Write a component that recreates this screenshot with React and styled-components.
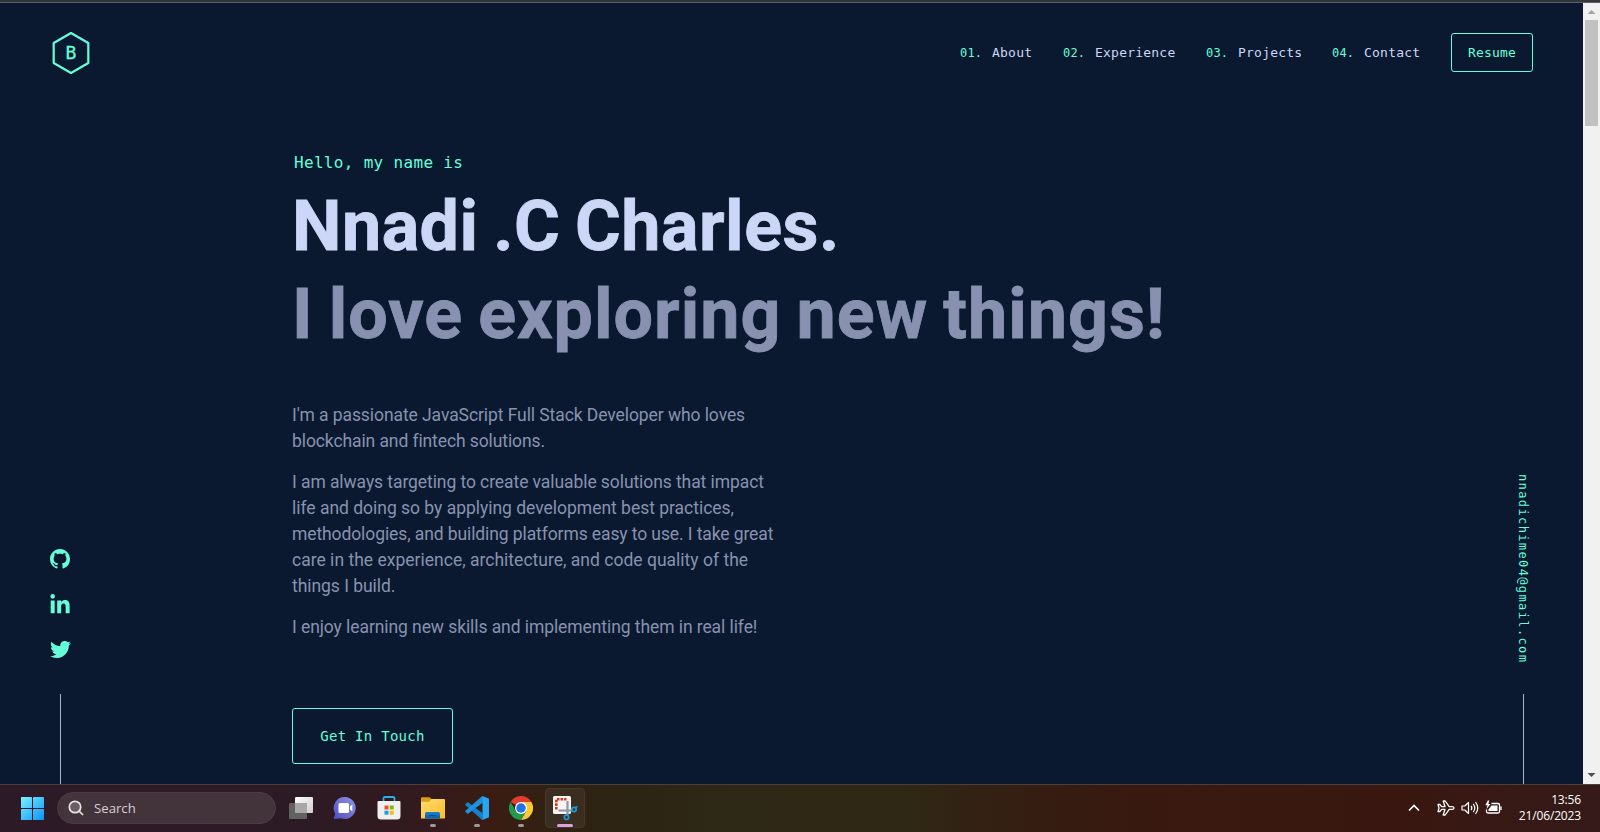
import React from "react";
import styled, { createGlobalStyle } from "styled-components";
import { FaLinkedinIn, FaTwitter } from "react-icons/fa";

const navy = "#0a192f";
const green = "#64ffda";
const slate = "#8892b0";
const mono = `"DejaVu Sans Mono", "Liberation Mono", monospace`;
const sans = `Roboto, "Liberation Sans", sans-serif`;

const GlobalStyle = createGlobalStyle`
  * { box-sizing: border-box; }
  body { margin: 0; background: ${navy}; overflow: hidden; }
  h1, h2, p, ul { margin: 0; padding: 0; }
  a { color: inherit; text-decoration: none; }
`;

const Desktop = styled.div`
  width: 1600px;
  height: 832px;
  display: flex;
  flex-direction: column;
  overflow: hidden;
  font-family: ${sans};
`;

const BrowserEdge = styled.div`
  height: 3px;
  flex: none;
  background: #35363a;
  border-bottom: 1px solid #5f6064;
`;

const Viewport = styled.div`
  height: 781px;
  flex: none;
  display: flex;
`;

const Page = styled.div`
  flex: 1;
  display: flex;
  flex-direction: column;
  background: ${navy};
`;

const Header = styled.header`
  height: 100px;
  flex: none;
  display: flex;
  align-items: center;
  justify-content: space-between;
  padding: 0 50px;
`;

const Logo = styled.svg`
  display: block;
  width: 42px;
  height: 44px;
  text {
    font: 18px ${mono};
    fill: ${green};
    stroke: ${green};
    stroke-width: 0.3;
  }
`;

const Nav = styled.nav`
  display: flex;
  align-items: center;
`;

const NavLink = styled.a`
  display: flex;
  align-items: baseline;
  width: ${(p) => p.$width}px;
  font: 13px/20px ${mono};
  letter-spacing: 0.22px;
  color: #ccd6f6;
  white-space: pre;
`;

const NavNumber = styled.span`
  width: 32px;
  font-size: 12px;
  letter-spacing: 0.2px;
  color: ${green};
`;

const OutlineButton = styled.a`
  display: flex;
  align-items: center;
  justify-content: center;
  width: ${(p) => (p.$large ? 161 : 82)}px;
  height: ${(p) => (p.$large ? 56 : 39)}px;
  margin-top: ${(p) => (p.$large ? 68 : 0)}px;
  margin-bottom: ${(p) => (p.$large ? 0 : 2)}px;
  border: 1px solid ${green};
  border-radius: 3px;
  color: ${green};
  font: ${(p) => (p.$large ? 14 : 13)}px/1 ${mono};
  letter-spacing: ${(p) => (p.$large ? 0.28 : 0.2)}px;
  white-space: pre;
`;

const Body = styled.div`
  flex: 1;
  display: flex;
  justify-content: space-between;
`;

const SideRail = styled.aside`
  width: ${(p) => p.$width}px;
  display: flex;
  flex-direction: column;
  justify-content: flex-end;
  align-items: center;
  color: ${green};
  &::after {
    content: "";
    width: 1px;
    height: 90px;
    background: #a8b2d1;
  }
`;

const SocialList = styled.div`
  display: flex;
  flex-direction: column;
  align-items: center;
  gap: 24px;
  margin-bottom: 34px;
  svg { display: block; }
  svg:first-child { margin-bottom: 1px; }
  svg:last-child { margin-top: -1px; }
`;

const Email = styled.a`
  writing-mode: vertical-rl;
  font: 12px/20px ${mono};
  letter-spacing: 1.38px;
  margin: 0 1px 31px 0;
`;

const Hero = styled.main`
  flex: 1;
  display: flex;
  flex-direction: column;
  align-items: flex-start;
  padding: 50px 0 0 172px;
`;

const Greeting = styled.h1`
  padding-left: 2px;
  font: 400 16px/20px ${mono};
  letter-spacing: 0.32px;
  color: ${green};
`;

const Title = styled.h2`
  margin-top: ${(p) => p.$top}px;
  font: 700 70px/77px ${sans};
  letter-spacing: ${(p) => p.$spacing}px;
  word-spacing: ${(p) => p.$wordSpacing}px;
  color: ${(p) => p.$color};
  -webkit-text-stroke: 0.8px ${(p) => p.$color};
  white-space: nowrap;
`;

const Paragraph = styled.p`
  margin-top: ${(p) => p.$top}px;
  font: 400 17.5px/26px ${sans};
  color: ${slate};
`;

const Line = styled.span`
  display: block;
  white-space: nowrap;
  letter-spacing: ${(p) => p.$spacing || 0}px;
`;

const Scrollbar = styled.div`
  width: 17px;
  display: flex;
  flex-direction: column;
  align-items: center;
  background: #f1f1f1;
  svg { display: block; flex: none; }
`;

const Thumb = styled.div`
  width: 13px;
  height: 106px;
  margin-bottom: auto;
  background: #c1c1c1;
`;

const Taskbar = styled.footer`
  height: 48px;
  flex: none;
  display: flex;
  align-items: center;
  padding: 0 19px 1px 21px;
  border-top: 1px solid #4a3f3c;
  background: linear-gradient(90deg, #2c1a27 0, #2c1a25 300px, #321a1d 420px, #3a1c13 495px, #2f2212 560px, #2c2514 650px, #2e2916 750px, #2f2815 900px, #332012 990px, #38190f 1130px, #391710 1400px, #351a19 1600px);
  font-family: "Open Sans", "Noto Sans", sans-serif;
`;

const StartButton = styled.div`
  padding-top: 1px;
  svg { display: block; }
`;

const SearchBox = styled.div`
  width: 219px;
  height: 32px;
  margin: 0 13px 0 13px;
  display: flex;
  align-items: center;
  gap: 10px;
  padding-left: 10px;
  border: 1px solid #4b3b43;
  border-radius: 16px;
  background: #43343c;
  color: #d5cfd2;
  font-size: 13.2px;
`;

const Apps = styled.div`
  display: flex;
  gap: 4px;
  margin-left: -8px;
`;

const AppButton = styled.div`
  position: relative;
  width: 40px;
  height: 40px;
  display: flex;
  align-items: center;
  justify-content: center;
  border-radius: 4px;
  border: 1px solid ${(p) => (p.$state === "active" ? "#43382b" : "transparent")};
  background: ${(p) => (p.$state === "active" ? "#3b2e21" : "transparent")};
  svg { display: block; }
  &::after {
    content: "";
    display: ${(p) => (p.$state ? "block" : "none")};
    position: absolute;
    bottom: 0;
    width: ${(p) => (p.$state === "active" ? 16 : 6)}px;
    height: 3px;
    border-radius: 2px;
    background: ${(p) => (p.$state === "active" ? "#dda0e0" : "#a09896")};
  }
`;

const Tray = styled.div`
  margin-left: auto;
  display: flex;
  align-items: center;
  color: #fff;
`;

const Clock = styled.div`
  width: 79px;
  text-align: right;
  font-size: 12px;
  line-height: 16px;
  letter-spacing: -0.15px;
  padding-bottom: 1px;
`;

const links = [
  ["01.", "About", 103],
  ["02.", "Experience", 143],
  ["03.", "Projects", 126],
  ["04.", "Contact", 119],
];

const GithubIcon = () => (
  <svg width="20" height="20" viewBox="0 0 16 16" fill="currentColor">
    <path d="M8 0C3.58 0 0 3.58 0 8c0 3.54 2.29 6.53 5.47 7.59.4.07.55-.17.55-.38 0-.19-.01-.82-.01-1.49-2.01.37-2.53-.49-2.69-.94-.09-.23-.48-.94-.82-1.13-.28-.15-.68-.52-.01-.53.63-.01 1.08.58 1.23.82.72 1.21 1.87.87 2.33.66.07-.52.28-.87.51-1.07-1.78-.2-3.64-.89-3.64-3.95 0-.87.31-1.59.82-2.15-.08-.2-.36-1.02.08-2.12 0 0 .67-.21 2.2.82.64-.18 1.32-.27 2-.27s1.36.09 2 .27c1.53-1.04 2.2-.82 2.2-.82.44 1.1.16 1.92.08 2.12.51.56.82 1.27.82 2.15 0 3.07-1.87 3.75-3.65 3.95.29.25.54.73.54 1.48 0 1.07-.01 1.93-.01 2.2 0 .21.15.46.55.38A8.01 8.01 0 0 0 16 8c0-4.42-3.58-8-8-8z" />
  </svg>
);

const WindowsIcon = () => (
  <svg width="23" height="23" viewBox="0 0 23 23">
    <defs>
      <linearGradient id="win" gradientUnits="userSpaceOnUse" x1="0" y1="0" x2="23" y2="23">
        <stop stopColor="#7df0ff" />
        <stop offset="1" stopColor="#0a93f5" />
      </linearGradient>
    </defs>
    <g fill="url(#win)">
      <rect width="11" height="11" rx=".6" />
      <rect x="12" width="11" height="11" rx=".6" />
      <rect y="12" width="11" height="11" rx=".6" />
      <rect x="12" y="12" width="11" height="11" rx=".6" />
    </g>
  </svg>
);

const TaskViewIcon = () => (
  <svg width="24" height="22" viewBox="0 0 24 22">
    <defs>
      <linearGradient id="tv" x1="0" y1="0" x2="1" y2="1">
        <stop stopColor="#fff" />
        <stop offset="1" stopColor="#cfcdcd" />
      </linearGradient>
    </defs>
    <rect x="6" width="18" height="16" rx="1" fill="url(#tv)" />
    <rect y="6" width="18" height="16" rx="1" fill="#626060" />
    <path d="M6 6h12v10H6z" fill="#a8a6a6" />
  </svg>
);

const ChatIcon = () => (
  <svg width="24" height="24" viewBox="0 0 24 24">
    <defs>
      <linearGradient id="chat" x1="0" y1="1" x2="1" y2="0">
        <stop stopColor="#4a4fc4" />
        <stop offset=".5" stopColor="#7470d0" />
        <stop offset="1" stopColor="#8b96e8" />
      </linearGradient>
    </defs>
    <path d="M12 1a11 11 0 1 1-4.4 21.2L1.7 23c-.7.1-1-.4-.8-1l1.3-4.4A11 11 0 0 1 12 1z" fill="url(#chat)" />
    <rect x="5.500" y="7" width="10.500" height="10" rx="1.500" fill="#fff" />
    <path d="M17 10.500 19.300 8.500v7L17 13.500z" fill="#fff" />
  </svg>
);

const StoreIcon = () => (
  <svg width="24" height="24" viewBox="0 0 24 24">
    <path d="M6.500 6V2.500Q6.500 1 8 1h8q1.500 0 1.500 1.500V6" fill="none" stroke="#29aee6" strokeWidth="1.800" />
    <path d="M.5 6q0-1 1-1h21q1 0 1 1v14q0 3.500-3.500 3.500H4Q.5 23.500.5 20z" fill="#efefef" />
    <path d="M7.500 9.500h4v4h-4z" fill="#f0502a" />
    <path d="M12.700 9.500h4v4h-4z" fill="#7cb912" />
    <path d="M7.500 14.700h4v4h-4z" fill="#10a3ea" />
    <path d="M12.700 14.700h4v4h-4z" fill="#fdb90c" />
  </svg>
);

const FolderIcon = () => (
  <svg width="24" height="22" viewBox="0 0 24 22">
    <defs>
      <linearGradient id="folder" x1="0" y1="0" x2="1" y2="1">
        <stop stopColor="#ffdc70" />
        <stop offset="1" stopColor="#fbbd2b" />
      </linearGradient>
      <linearGradient id="dock" x1="0" y1="0" x2="0" y2="1">
        <stop stopColor="#1684d8" />
        <stop offset="1" stopColor="#0b5ca9" />
      </linearGradient>
    </defs>
    <path d="M0 1.200Q0 .2 1 .2h7.500L10.500 2H20v6H0z" fill="#df9c12" />
    <path d="M0 4.800h8L10.500 2H23q1 0 1 1v18.500H0z" fill="url(#folder)" />
    <path d="M4 21.500v-5Q4 15 5.500 15h12q1.500 0 1.500 1.500v5z" fill="url(#dock)" />
    <path d="M8 18.500h7" stroke="#084e91" />
  </svg>
);

const CodeIcon = () => (
  <svg width="24" height="24" viewBox="0 0 24 24">
    <path d="M17.500 0 24 2.800v18.400L17.500 24z" fill="#27a7f2" />
    <path d="M.5 8 2.300 6.400q.5-.4 1 0L18 17.500V24q-.8-.1-1.300-.6L.5 9.200q-.6-.6 0-1.200z" fill="#1680c8" />
    <path d="M.5 16 2.300 17.600q.5.4 1 0L18 6.500V0q-.8.1-1.300.6L.5 14.800q-.6.6 0 1.200z" fill="#1c93dd" />
  </svg>
);

const ChromeIcon = () => (
  <svg width="24" height="24" viewBox="0 0 48 48">
    <path d="M24 24 3.200 12A24 24 0 0 1 44.800 12z" fill="#e33b2e" />
    <path d="M24 12h20.800A24 24 0 0 1 24 48l10.400-18z" fill="#fcc934" />
    <path d="M3.200 12 13.600 30 24 36h5L24 48A24 24 0 0 1 3.200 12z" fill="#219a4c" />
    <path d="M24 48 34.400 30 24 34l-3 2 3.500-.2z" fill="#219a4c" />
    <circle cx="24" cy="24" r="12" fill="#fff" />
    <circle cx="24" cy="24" r="9.500" fill="#1f73e8" />
  </svg>
);

const SnipIcon = () => (
  <svg width="26" height="26" viewBox="0 0 26 26">
    <rect x="1" y="1" width="18" height="18" rx="1.500" fill="#f5f3f3" />
    <path d="M4.300 14.500V4.300H14.500" fill="none" stroke="#d2381f" strokeWidth="2.600" strokeDasharray="2.600 1" />
    <path d="M15.500 6v9.500H21M6.500 15.500h9v5" fill="none" stroke="#8f979e" strokeWidth="2.200" />
    <circle cx="14.500" cy="22.300" r="2.200" fill="none" stroke="#1c9ad8" strokeWidth="1.700" />
    <circle cx="22" cy="14.500" r="2.200" fill="none" stroke="#1c9ad8" strokeWidth="1.700" />
    <path d="m23.500 12.500 2-1" fill="none" stroke="#1c9ad8" strokeWidth="1.500" />
  </svg>
);

const TrayIcons = () => (
  <svg width="96" height="20" viewBox="0 0 96 20" fill="none" stroke="#fff" strokeWidth="1.300">
    <path d="m3 12.500 5-5 5 5" strokeWidth="1.600" />
    <path transform="translate(31 2)" d="M1 4.500h1.800l2 2.200H8L6.200 1h2l4 5.700h3.300q1.500.3 1.500 1.300t-1.500 1.300h-3.300l-4 5.700h-2L8 9.300H4.800l-2 2.200H1L2 8z" strokeLinejoin="round" />
    <path transform="translate(.5 0)" d="M55.500 8h2.800L62 4.500v11L58.300 12h-2.800zM64.500 7.800q1.800 2.200 0 4.400M66.700 5.800q3.300 4.200 0 8.400M69 4q4.600 6 0 12" strokeWidth="1.200" strokeLinejoin="round" />
    <path d="M85.500 5.500H92q1.500 0 1.500 1.500v6.500q0 1.500-1.500 1.500H82q-1.500 0-1.500-1.500V11.500M95 8.500v3.500" />
    <path d="M85.500 7.500h6V13h-9v-1.500z" fill="#fff" stroke="none" />
    <path d="M81.800 2.500 79.300 7.200h2.200l-1 3.800L84.500 6h-2.200l1-3.500z" fill="#fff" stroke="none" />
  </svg>
);

export default function App() {
  return (
    <Desktop>
      <GlobalStyle />
      <BrowserEdge />
      <Viewport>
        <Page>
          <Header>
            <Logo viewBox="0 0 42 44">
              <path d="M21 2 38.300 12v20L21 42 3.700 32V12z" fill="none" stroke={green} strokeWidth="2.200" strokeLinejoin="round" />
              <text x="21" y="28" textAnchor="middle">B</text>
            </Logo>
            <Nav>
              {links.map(([number, label, width]) => (
                <NavLink key={number} $width={width}>
                  <NavNumber>{number}</NavNumber>
                  {label}
                </NavLink>
              ))}
              <OutlineButton>Resume</OutlineButton>
            </Nav>
          </Header>
          <Body>
            <SideRail $width={120}>
              <SocialList>
                <GithubIcon />
                <FaLinkedinIn size={22} />
                <FaTwitter size={21} />
              </SocialList>
            </SideRail>
            <Hero>
              <Greeting>Hello, my name is</Greeting>
              <Title $top={15} $spacing={0.5} $wordSpacing={-3.2} $color="#ccd6f6">Nnadi .C Charles.</Title>
              <Title $top={11} $spacing={1} $wordSpacing={-3.2} $color={slate}>I love exploring new things!</Title>
              <Paragraph $top={49}>
                <Line $spacing={-0.08}>I'm a passionate JavaScript Full Stack Developer who loves</Line>
                <Line $spacing={-0.1}>blockchain and fintech solutions.</Line>
              </Paragraph>
              <Paragraph $top={15}>
                <Line $spacing={-0.08}>I am always targeting to create valuable solutions that impact</Line>
                <Line $spacing={-0.02}>life and doing so by applying development best practices,</Line>
                <Line $spacing={-0.1}>methodologies, and building platforms easy to use. I take great</Line>
                <Line $spacing={0.01}>care in the experience, architecture, and code quality of the</Line>
                <Line $spacing={-0.05}>things I build.</Line>
              </Paragraph>
              <Paragraph $top={15}>
                <Line $spacing={-0.08}>I enjoy learning new skills and implementing them in real life!</Line>
              </Paragraph>
              <OutlineButton $large>Get In Touch</OutlineButton>
            </Hero>
            <SideRail $width={119}>
              <Email>nnadichime04@gmail.com</Email>
            </SideRail>
          </Body>
        </Page>
        <Scrollbar>
          <svg width="17" height="17"><path d="m4.500 11 4-4 4 4z" fill="#a3a3a3" /></svg>
          <Thumb />
          <svg width="17" height="17"><path d="m4.500 6 4 4 4-4z" fill="#505050" /></svg>
        </Scrollbar>
      </Viewport>
      <Taskbar>
        <StartButton><WindowsIcon /></StartButton>
        <SearchBox>
          <svg width="16" height="16" viewBox="0 0 16 16" fill="#6a5d64" stroke="#e8e4e6" strokeWidth="1.700">
            <circle cx="7" cy="7" r="5.700" />
            <path d="m11 11 4 4" />
          </svg>
          Search
        </SearchBox>
        <Apps>
          <AppButton><TaskViewIcon /></AppButton>
          <AppButton><ChatIcon /></AppButton>
          <AppButton><StoreIcon /></AppButton>
          <AppButton $state="open"><FolderIcon /></AppButton>
          <AppButton $state="open"><CodeIcon /></AppButton>
          <AppButton $state="open"><ChromeIcon /></AppButton>
          <AppButton $state="active"><SnipIcon /></AppButton>
        </Apps>
        <Tray>
          <TrayIcons />
          <Clock>
            <div>13:56</div>
            <div>21/06/2023</div>
          </Clock>
        </Tray>
      </Taskbar>
    </Desktop>
  );
}
